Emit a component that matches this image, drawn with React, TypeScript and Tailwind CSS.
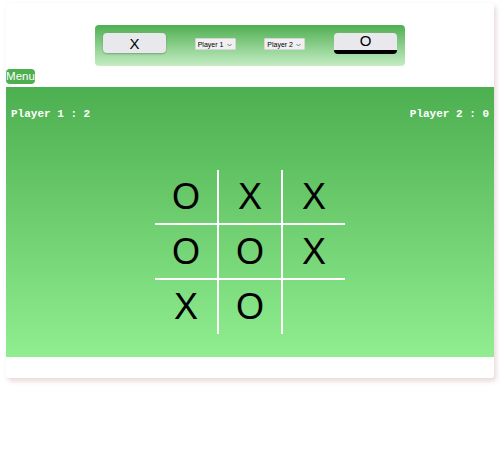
import React from "react";

const board = [
  ["O", "X", "X"],
  ["O", "O", "X"],
  ["X", "O", ""],
];

const cellBorder = (r: number, c: number) => {
  let cls = "";
  if (c < 2) cls += " border-r-2";
  if (r < 2) cls += " border-b-2";
  return cls;
};

function PlayerSelect({ label }: { label: string }) {
  return (
    <div className="mt-[13px] w-[41px] h-[12px] bg-[#f0f0f0] border border-[#d6d6d6] rounded-[1px] flex items-center justify-between pl-[2px] pr-[3px] text-black text-[7px] leading-none whitespace-nowrap">
      <span>{label}</span>
      <svg width="5" height="4" viewBox="0 0 5 4" className="mt-[1px] shrink-0">
        <path d="M0.5 1 L2.5 3 L4.5 1" fill="none" stroke="#555" strokeWidth="0.8" />
      </svg>
    </div>
  );
}

export default function App() {
  return (
    <div className="w-[500px] h-[474px] bg-white pt-[3px] font-['Liberation_Sans',Arial,sans-serif]">
      <div className="mx-[6px] w-[488px] bg-white rounded-[3px] shadow-[2px_3px_5px_rgba(190,140,140,0.35)]">
        {/* Top bar */}
        <div className="pt-[22px] flex justify-center">
          <div className="w-[310px] h-[41px] rounded-[4px] bg-gradient-to-b from-[#4caf50] to-[#c4edc4] px-[8px] flex items-start justify-between">
            <button className="mt-[8px] w-[63px] h-[20px] rounded-[4px] bg-[#e9e9ed] shadow-[0_1px_2px_rgba(0,0,0,0.25)] text-[15px] leading-none text-black">
              X
            </button>
            <PlayerSelect label="Player 1" />
            <PlayerSelect label="Player 2" />
            <button className="mt-[8px] w-[63px] h-[21px] rounded-[4px] bg-[#e9e9ed] border-b-4 border-black text-[15px] leading-none text-black pb-[3px]">
              O
            </button>
          </div>
        </div>

        {/* Menu */}
        <div className="mt-[3px] flex">
          <button className="h-[15px] w-[29px] rounded-[4px] bg-[#4caf50] text-white text-[11.5px] leading-none">
            Menu
          </button>
        </div>

        {/* Board */}
        <div className="mt-[3px] h-[270px] bg-gradient-to-b from-[#4caf50] to-[#90ee90] px-[5px] pt-[20px]">
          <div className="flex justify-between text-white font-bold text-[11px] leading-[14px] font-['Liberation_Mono','Courier_New',monospace]">
            <span>Player 1 : 2</span>
            <span>Player 2 : 0</span>
          </div>
          <div className="mt-[49px] flex justify-center">
            <div className="grid grid-cols-[64px_64px_62px]">
              {board.map((row, r) =>
                row.map((v, c) => (
                  <div
                    key={`${r}-${c}`}
                    className={`${r === 2 ? "h-[54px]" : "h-[55px]"} border-white flex items-center justify-center text-[36px] text-black leading-none${cellBorder(r, c)}`}
                  >
                    {v}
                  </div>
                ))
              )}
            </div>
          </div>
        </div>
        <div className="h-[21px]" />
      </div>
    </div>
  );
}
